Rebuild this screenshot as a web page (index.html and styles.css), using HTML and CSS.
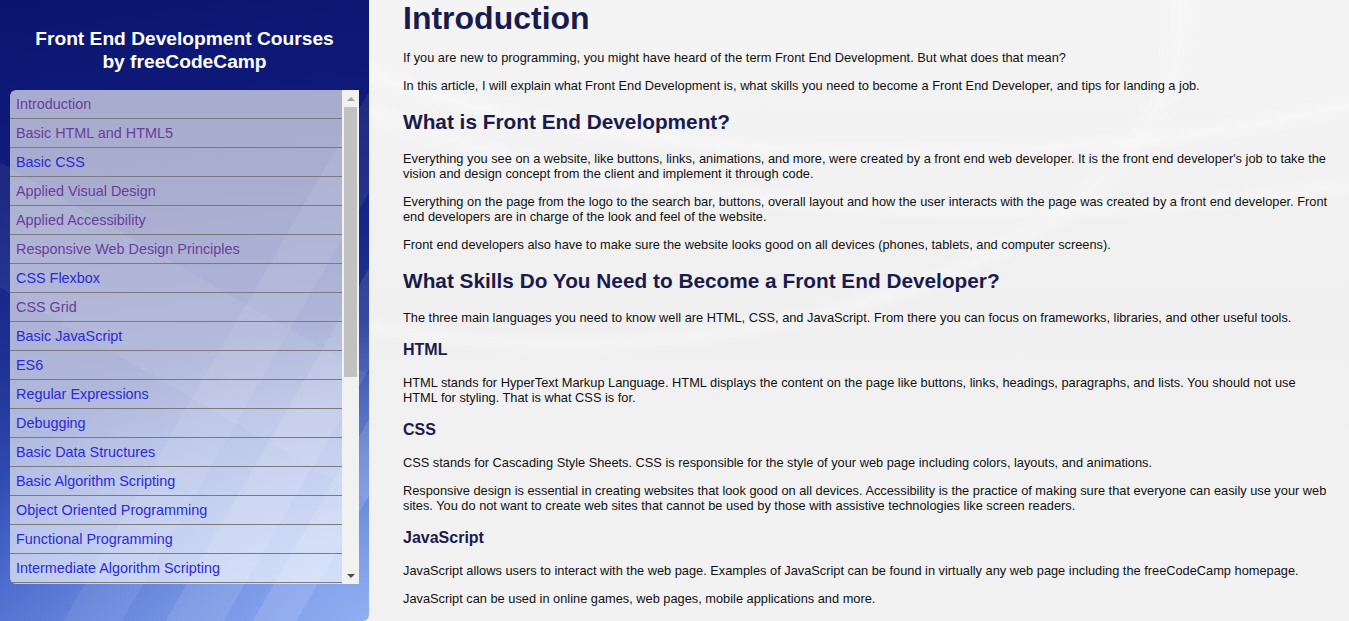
FILE: index.html
```html
<!DOCTYPE html>
<html lang="en">
<head>
<meta charset="utf-8">
<title>Front End Development Courses by freeCodeCamp</title>
<link rel="stylesheet" href="styles.css">
</head>
<body>
<div class="page">
  <aside class="sidebar">
    <h2 class="site-title">Front End Development Courses<br>by freeCodeCamp</h2>
    <nav class="course-nav">
      <ul class="course-list">
        <li><a class="visited" href="#intro">Introduction</a></li>
        <li><a class="visited" href="#html">Basic HTML and HTML5</a></li>
        <li><a href="#css">Basic CSS</a></li>
        <li><a class="visited" href="#avd">Applied Visual Design</a></li>
        <li><a class="visited" href="#a11y">Applied Accessibility</a></li>
        <li><a class="visited" href="#rwd">Responsive Web Design Principles</a></li>
        <li><a href="#flex">CSS Flexbox</a></li>
        <li><a class="visited" href="#grid">CSS Grid</a></li>
        <li><a href="#js">Basic JavaScript</a></li>
        <li><a href="#es6">ES6</a></li>
        <li><a href="#regex">Regular Expressions</a></li>
        <li><a href="#debug">Debugging</a></li>
        <li><a href="#ds">Basic Data Structures</a></li>
        <li><a href="#bas">Basic Algorithm Scripting</a></li>
        <li><a href="#oop">Object Oriented Programming</a></li>
        <li><a href="#fp">Functional Programming</a></li>
        <li><a href="#ias">Intermediate Algorithm Scripting</a></li>
      </ul>
      <div class="scrollbar" aria-hidden="true">
        <span class="sb-btn"><span class="arrow-up"></span></span>
        <div class="sb-track"><div class="sb-thumb"></div></div>
        <span class="sb-btn"><span class="arrow-down"></span></span>
      </div>
    </nav>
  </aside>
  <main class="content">
    <h1>Introduction</h1>
    <p>If you are new to programming, you might have heard of the term Front End Development. But what does that mean?</p>
    <p>In this article, I will explain what Front End Development is, what skills you need to become a Front End Developer, and tips for landing a job.</p>
    <h2>What is Front End Development?</h2>
    <p>Everything you see on a website, like buttons, links, animations, and more, were created by a front end web developer. It is the front end developer's job to take the vision and design concept from the client and implement it through code.</p>
    <p>Everything on the page from the logo to the search bar, buttons, overall layout and how the user interacts with the page was created by a front end developer. Front end developers are in charge of the look and feel of the website.</p>
    <p>Front end developers also have to make sure the website looks good on all devices (phones, tablets, and computer screens).</p>
    <h2>What Skills Do You Need to Become a Front End Developer?</h2>
    <p>The three main languages you need to know well are HTML, CSS, and JavaScript. From there you can focus on frameworks, libraries, and other useful tools.</p>
    <h3>HTML</h3>
    <p>HTML stands for HyperText Markup Language. HTML displays the content on the page like buttons, links, headings, paragraphs, and lists. You should not use HTML for styling. That is what CSS is for.</p>
    <h3>CSS</h3>
    <p>CSS stands for Cascading Style Sheets. CSS is responsible for the style of your web page including colors, layouts, and animations.</p>
    <p>Responsive design is essential in creating websites that look good on all devices. Accessibility is the practice of making sure that everyone can easily use your web sites. You do not want to create web sites that cannot be used by those with assistive technologies like screen readers.</p>
    <h3>JavaScript</h3>
    <p>JavaScript allows users to interact with the web page. Examples of JavaScript can be found in virtually any web page including the freeCodeCamp homepage.</p>
    <p>JavaScript can be used in online games, web pages, mobile applications and more.</p>
  </main>
</div>
</body>
</html>
```

FILE: styles.css
```css
html, body {
  margin: 0;
  padding: 0;
  height: 100%;
  overflow: hidden;
}

body {
  font-family: "Liberation Sans", Arial, sans-serif;
  font-size: 16px;
  background: #f1f1f1;
  color: #111;
}

.page {
  display: flex;
  height: 100vh;
}

/* ---------- Sidebar ---------- */
.sidebar {
  width: 369px;
  flex: 0 0 369px;
  display: flex;
  flex-direction: column;
  border-bottom-right-radius: 6px;
  background:
    linear-gradient(120deg, transparent 58%, rgba(255,255,255,0.07) 58%, rgba(255,255,255,0.07) 66%, transparent 66%),
    linear-gradient(120deg, transparent 72%, rgba(255,255,255,0.10) 72%, rgba(255,255,255,0.10) 80%, transparent 80%),
    linear-gradient(120deg, transparent 84%, rgba(255,255,255,0.12) 84%, rgba(255,255,255,0.12) 90%, transparent 90%),
    linear-gradient(30deg, transparent 40%, rgba(255,255,255,0.06) 40%, rgba(255,255,255,0.06) 55%, transparent 55%),
    radial-gradient(ellipse 420px 300px at 100% 100%, rgba(150,180,245,0.9), rgba(150,180,245,0) 100%),
    linear-gradient(172deg, #0b1471 0%, #111d7c 30%, #1f3394 55%, #3a58c0 80%, #5a7ad6 100%);
}

.site-title {
  margin: 0 0 17px;
  padding-top: 27px;
  font-size: 19.2px;
  line-height: 23px;
  font-weight: bold;
  color: #fff;
  text-align: center;
}

.course-nav {
  display: flex;
  height: 494px;
  margin: 0 10px 0 10px;
}

.course-list {
  flex: 1;
  margin: 0;
  padding: 0;
  list-style: none;
  overflow: hidden;
  background: rgba(255,255,255,0.64);
  border-radius: 6px 0 0 6px;
}

.course-list li {
  height: 28px;
  border-bottom: 1px solid #7b7b7f;
  display: flex;
  align-items: center;
  padding-left: 6px;
}

.course-list a {
  font-size: 14.4px;
  color: #2a2ad8;
  text-decoration: none;
}

.course-list a.visited {
  color: #6a3d9c;
}

/* fake classic scrollbar */
.scrollbar {
  width: 17px;
  flex: 0 0 17px;
  display: flex;
  flex-direction: column;
  background: #f1f1f1;
}

.sb-btn {
  height: 17px;
  flex: 0 0 17px;
  display: flex;
  align-items: center;
  justify-content: center;
}

.arrow-up {
  width: 0;
  height: 0;
  border-left: 4px solid transparent;
  border-right: 4px solid transparent;
  border-bottom: 4px solid #a3a3a3;
}

.arrow-down {
  width: 0;
  height: 0;
  border-left: 4px solid transparent;
  border-right: 4px solid transparent;
  border-top: 4px solid #505050;
}

.sb-track {
  flex: 1;
  padding: 0 2px;
}

.sb-thumb {
  height: 270px;
  background: #c1c1c1;
}

/* ---------- Main content ---------- */
.content {
  flex: 1;
  padding: 0 20px 0 34px;
  overflow: hidden;
  background:
    radial-gradient(ellipse 900px 260px at 55% -40px, rgba(255,255,255,0) 70%, rgba(255,255,255,0.35) 74%, rgba(255,255,255,0) 78%),
    radial-gradient(ellipse 1100px 360px at 65% -60px, rgba(255,255,255,0) 72%, rgba(255,255,255,0.3) 75%, rgba(255,255,255,0) 78%),
    radial-gradient(ellipse 800px 420px at 20% 20px, rgba(255,255,255,0) 74%, rgba(255,255,255,0.25) 77%, rgba(255,255,255,0) 80%),
    linear-gradient(180deg, #f4f4f4 0%, #f0f0f0 50%, #f2f2f2 100%);
}

.content h1,
.content h2,
.content h3 {
  color: #1b1a4c;
  font-weight: bold;
}

.content h1 {
  font-size: 32px;
  margin: 0;
}

.content h2 {
  font-size: 20.8px;
  margin: 0.83em 0;
}

.content h3 {
  font-size: 16px;
  margin: 1em 0;
}

.content p {
  font-size: 12.8px;
  margin: 1em 0;
}
```
